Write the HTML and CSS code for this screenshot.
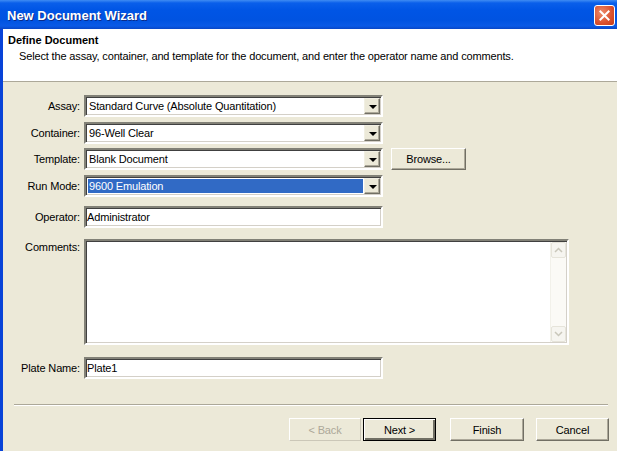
FILE: index.html
```html
<!DOCTYPE html>
<html lang="en">
<head>
    <meta charset="UTF-8">
    <title>New Document Wizard</title>
    <link rel="stylesheet" href="styles.css">
</head>
<body>
    <div class="window">
        <div class="titlebar">
            <span class="title">New Document Wizard</span>
            <div class="close-btn">
                <svg width="21" height="21" viewBox="0 0 21 21">
                    <path d="M6 6 L15 15 M15 6 L6 15" stroke="#fff" stroke-width="2.2" stroke-linecap="square"/>
                </svg>
            </div>
        </div>

        <div class="wizard-header">
            <h1>Define Document</h1>
            <p>Select the assay, container, and template for the document, and enter the operator name and comments.</p>
        </div>

        <div class="wizard-body">
            <div class="form">
                <div class="row">
                    <label>Assay:</label>
                    <div class="combo">
                        <span class="combo-text">Standard Curve (Absolute Quantitation)</span>
                        <span class="combo-arrow"></span>
                    </div>
                </div>
                <div class="row nudge">
                    <label>Container:</label>
                    <div class="combo">
                        <span class="combo-text">96-Well Clear</span>
                        <span class="combo-arrow"></span>
                    </div>
                </div>
                <div class="row">
                    <label>Template:</label>
                    <div class="combo">
                        <span class="combo-text">Blank Document</span>
                        <span class="combo-arrow"></span>
                    </div>
                    <button class="btn browse">Browse...</button>
                </div>
                <div class="row nudge">
                    <label>Run Mode:</label>
                    <div class="combo">
                        <span class="combo-text selected">9600 Emulation</span>
                        <span class="combo-arrow"></span>
                    </div>
                </div>
                <div class="row operator-row">
                    <label>Operator:</label>
                    <div class="textbox">Administrator</div>
                </div>
                <div class="row comments-row">
                    <label>Comments:</label>
                    <div class="textarea">
                        <div class="scrollbar">
                            <div class="sb-btn">
                                <svg width="9" height="6" viewBox="0 0 9 6"><path d="M1 5 L4.5 1.5 L8 5" fill="none" stroke="#c9c7ba" stroke-width="1.5"/></svg>
                            </div>
                            <div class="sb-track"></div>
                            <div class="sb-btn">
                                <svg width="9" height="6" viewBox="0 0 9 6"><path d="M1 1 L4.5 4.5 L8 1" fill="none" stroke="#c9c7ba" stroke-width="1.5"/></svg>
                            </div>
                        </div>
                    </div>
                </div>
                <div class="row plate-row">
                    <label>Plate Name:</label>
                    <div class="textbox">Plate1</div>
                </div>
            </div>

            <div class="separator"></div>

            <div class="buttons">
                <button class="btn back">&lt; Back</button>
                <button class="btn next">Next &gt;</button>
                <button class="btn finish">Finish</button>
                <button class="btn cancel">Cancel</button>
            </div>
        </div>
    </div>
</body>
</html>
```

FILE: styles.css
```css
* {
    margin: 0;
    padding: 0;
    box-sizing: border-box;
}

body {
    font-family: 'Liberation Sans', Arial, sans-serif;
    font-size: 11px;
    letter-spacing: -0.15px;
    color: #000;
    background: #ece9d8;
    width: 617px;
    height: 451px;
    overflow: hidden;
}

.window {
    height: 451px;
    display: flex;
    flex-direction: column;
    border-left: 3px solid #0843d8;
    background: #ece9d8;
}

.titlebar {
    height: 29px;
    flex-shrink: 0;
    margin-left: -3px;
    background: linear-gradient(#3f8cf3 0, #0a5fea 3px, #0055e5 10px, #0053e1 20px, #0a5ae6 26px, #0846c6 29px);
    display: flex;
    align-items: center;
    justify-content: space-between;
    padding: 0 2px 0 7px;
}

.title {
    color: #fff;
    font-weight: bold;
    font-size: 13px;
    letter-spacing: 0;
    text-shadow: 1px 1px 0 #0a2c8a;
    padding-top: 1px;
}

.close-btn {
    width: 21px;
    height: 21px;
    border: 1px solid #fff;
    border-radius: 3px;
    background: radial-gradient(circle at 35% 35%, #ee8c6c, #d9502e 60%, #c23c1a);
    display: flex;
    align-items: center;
    justify-content: center;
    margin-top: 1px;
}

.wizard-header {
    height: 53px;
    flex-shrink: 0;
    background: #fff;
    border-bottom: 1px solid #aca899;
    padding: 4px 0 0 5px;
}

.wizard-header h1 {
    font-size: 11px;
    font-weight: bold;
    line-height: 14px;
    letter-spacing: 0;
}

.wizard-header p {
    margin-top: 2px;
    padding-left: 11px;
    line-height: 14px;
}

.wizard-body {
    flex: 1;
    padding-top: 13px;
}

.form {
    display: flex;
    flex-direction: column;
    gap: 4px;
}

.row {
    display: flex;
    align-items: center;
    gap: 4px;
}

.row label {
    width: 77px;
    text-align: right;
    flex-shrink: 0;
}

.nudge {
    margin-top: 1px;
}

.combo {
    width: 299px;
    height: 22px;
    background: #fff;
    border: 2px solid;
    border-color: #828177 #fff #fff #828177;
    box-shadow: inset 1px 1px 0 #404040, inset -1px -1px 0 #d4d0c8;
    display: flex;
    align-items: stretch;
    padding: 2px;
}

.combo-text {
    flex: 1;
    padding-left: 1px;
    line-height: 14px;
}

.combo-text.selected {
    background: #316ac5;
    color: #fff;
    margin-right: 1px;
}

.combo-arrow {
    width: 16px;
    background: #ece9d8;
    border: 1px solid;
    border-color: #f1efe2 #716f64 #716f64 #f1efe2;
    box-shadow: inset -1px -1px 0 #aca899;
    position: relative;
    margin: -1px -1px -1px 0;
}

.combo-arrow::after {
    content: "";
    position: absolute;
    left: 4px;
    top: 6px;
    border-left: 4px solid transparent;
    border-right: 4px solid transparent;
    border-top: 4px solid #000;
}

.operator-row {
    margin-top: 5px;
}

.textbox {
    width: 299px;
    height: 22px;
    background: #fff;
    border: 2px solid;
    border-color: #828177 #fff #fff #828177;
    box-shadow: inset 1px 1px 0 #404040, inset -1px -1px 0 #d4d0c8;
    padding: 2px 0 0 1px;
    line-height: 14px;
}

.comments-row {
    align-items: flex-start;
    margin-top: 7px;
}

.comments-row label {
    padding-top: 2px;
}

.textarea {
    width: 485px;
    height: 106px;
    background: #fff;
    border: 2px solid;
    border-color: #828177 #fff #fff #828177;
    box-shadow: inset 1px 1px 0 #404040, inset -1px -1px 0 #d4d0c8;
    display: flex;
    justify-content: flex-end;
    padding: 1px 1px 1px 0;
}

.scrollbar {
    width: 16px;
    display: flex;
    flex-direction: column;
    background: #fdfdfa;
    border-left: 1px solid #f2f1ea;
}

.sb-btn {
    height: 16px;
    background: #f6f5f0;
    border: 1px solid #e6e4da;
    border-radius: 2px;
    display: flex;
    align-items: center;
    justify-content: center;
}

.sb-track {
    flex: 1;
    background: #fbfaf6;
}

.plate-row {
    margin-top: 8px;
}

.btn {
    font-family: 'Liberation Sans', Arial, sans-serif;
    font-size: 11px;
    letter-spacing: -0.15px;
    background: #ece9d8;
    color: #000;
    border: 1px solid;
    border-color: #fff #716f64 #716f64 #fff;
    box-shadow: inset -1px -1px 0 #aca899;
    height: 23px;
    width: 73px;
}

.browse {
    margin-left: 4px;
    height: 22px;
    width: 75px;
}

.separator {
    margin: 25px 9px 0 11px;
    border-top: 1px solid #aca899;
    border-bottom: 1px solid #fff;
}

.buttons {
    display: flex;
    justify-content: flex-end;
    margin-top: 12px;
    padding-right: 8px;
}

.btn.back {
    width: 72px;
    color: #aca899;
    border-color: #fff #cbc7b8 #cbc7b8 #fff;
    box-shadow: none;
}

.btn.next {
    margin-left: 2px;
    border: 1px solid #000;
    box-shadow: inset 1px 1px 0 #fff, inset -2px -2px 0 #716f64;
}

.btn.finish {
    width: 74px;
    margin-left: 14px;
}

.btn.cancel {
    margin-left: 12px;
}
```
